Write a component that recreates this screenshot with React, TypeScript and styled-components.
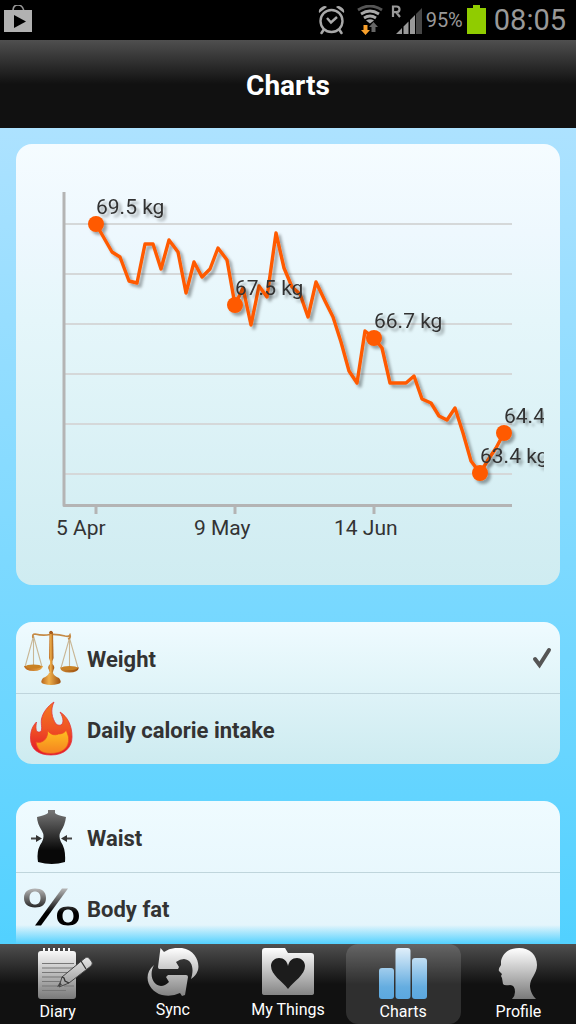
import React, { useState } from "react";
import styled, { createGlobalStyle } from "styled-components";

const GlobalStyle = createGlobalStyle`
  * { box-sizing: border-box; }
  body {
    margin: 0;
    background: #52d1ff;
    font-family: Roboto, "Liberation Sans", sans-serif;
    color: #333;
  }
`;

const Screen = styled.div`
  display: flex;
  flex-direction: column;
  height: 100vh;
  overflow: hidden;
`;

const StatusBar = styled.div`
  display: flex;
  align-items: center;
  justify-content: space-between;
  flex: none;
  height: 40px;
  padding: 0 10px 0 4px;
  background: #000;
  color: #999;
`;

const StatusGroup = styled.div`
  display: flex;
  align-items: center;
`;

const StatusGap = styled.span<{ $narrow?: boolean }>`
  width: ${(p) => (p.$narrow ? "8px" : "12px")};
`;

const BatteryLevel = styled.span`
  margin: 0 4px;
  font-size: 20px;
  line-height: 40px;
`;

const Clock = styled.span`
  margin-left: 8px;
  font-size: 29px;
  line-height: 40px;
`;

const Header = styled.header`
  display: flex;
  align-items: center;
  justify-content: center;
  flex: none;
  height: 88px;
  background: linear-gradient(#4f4f4f, #111 50%);
`;

const Title = styled.h1`
  margin: 0;
  padding-top: 4px;
  font-size: 28px;
  line-height: 32px;
  font-weight: 700;
  color: #fff;
`;

const Content = styled.main`
  position: relative;
  display: flex;
  flex-direction: column;
  gap: 37px;
  flex: 1;
  min-height: 0;
  overflow: hidden;
  padding: 16px 16px 0;
  background: linear-gradient(#ade2ff, #52d1ff);
`;

const BottomFade = styled.div`
  position: absolute;
  left: 0;
  right: 0;
  bottom: 0;
  height: 19px;
  background: linear-gradient(rgba(82, 209, 255, 0), #52d1ff);
  pointer-events: none;
`;

const ChartCard = styled.section`
  flex: none;
  padding: 16px;
  border-radius: 16px;
  background: linear-gradient(#f5fcff, #eef8fe 20%, #e5f6fa 40%, #cfecf1);
`;

const ChartDrawing = styled.svg`
  display: block;
  width: 100%;
  height: auto;
  overflow: hidden;
`;

const ChartText = styled.text`
  font-size: 21px;
  fill: #333;
`;

const Choices = styled.fieldset<{ $continues?: boolean }>`
  flex: ${(p) => (p.$continues ? "1 0 auto" : "none")};
  margin: 0;
  padding: 0;
  border: 0;
  border-radius: ${(p) => (p.$continues ? "16px 16px 0 0" : "16px")};
  overflow: hidden;
  background: ${(p) =>
    p.$continues
      ? "linear-gradient(#effbff, #e2f4fb)"
      : "linear-gradient(#effbff, #cdebf0)"};
`;

const ChoiceRow = styled.label`
  display: flex;
  align-items: center;
  gap: 8px;
  height: 71px;
  padding: 0 8px;
  font-size: 22px;
  line-height: 32px;
  font-weight: 700;
  cursor: pointer;

  & + & {
    border-top: 1px solid #bfd5dc;
  }
`;

const ChoiceName = styled.span`
  flex: 1;
  padding-top: 4px;
`;

const HiddenRadio = styled.input`
  appearance: none;
  width: 0;
  height: 0;
  margin: 0;
`;

const TabBar = styled.nav`
  display: flex;
  flex: none;
  height: 80px;
  background: linear-gradient(#4f4f4f, #111 50%);
`;

const Tab = styled.a<{ $active?: boolean }>`
  display: flex;
  flex: 1;
  flex-direction: column;
  align-items: center;
  padding-top: 4px;
  border-radius: 12px;
  background: ${(p) => (p.$active ? "rgba(255, 255, 255, 0.13)" : "none")};
  color: #fff;
  font-size: 16px;
  line-height: 24px;
  text-decoration: none;
`;

const weights: [number, number][] = [
  [64, 80], [72, 94], [80, 108], [88, 113], [97, 137], [105, 139], [113, 100],
  [121, 100], [129, 125], [137, 96], [146, 108], [154, 149], [162, 118],
  [170, 133], [178, 125], [186, 104], [195, 116], [203, 161], [211, 144],
  [219, 181], [227, 142], [235, 153], [244, 89], [252, 124], [260, 143],
  [268, 150], [276, 173], [284, 138], [293, 157], [301, 173], [309, 198],
  [317, 227], [325, 239], [333, 187], [342, 194], [350, 204], [358, 239],
  [366, 239], [374, 239], [382, 232], [390, 255], [399, 259], [407, 272],
  [415, 276], [423, 264], [431, 289], [439, 317], [448, 329], [456, 316],
  [464, 304], [472, 289],
];

const marks = [
  { x: 64, y: 80, label: "69.5 kg" },
  { x: 203, y: 161, label: "67.5 kg" },
  { x: 342, y: 194, label: "66.7 kg" },
  { x: 448, y: 329, label: "63.4 kg" },
  { x: 472, y: 289, label: "64.4 kg" },
];

const dates = [
  { x: 64, textX: 24, label: "5 Apr" },
  { x: 203, textX: 162, label: "9 May" },
  { x: 342, textX: 302, label: "14 Jun" },
];

function WeightChart() {
  return (
    <ChartDrawing viewBox="0 16 512 409" role="img" aria-label="Weight over time">
      <defs>
        <filter id="shade" x="-10%" y="-20%" width="130%" height="150%">
          <feDropShadow dx="3" dy="3" stdDeviation="1.6" floodColor="#000" floodOpacity="0.35" />
        </filter>
      </defs>
      <g stroke="#d5d8d9" strokeWidth="2">
        {[80, 130, 180, 230, 280, 330].map((y) => (
          <line key={y} x1="33" x2="480" y1={y} y2={y} />
        ))}
      </g>
      <path d="M32 48V361.5H480" fill="none" stroke="#b4b4b4" strokeWidth="3" strokeLinejoin="round" />
      {dates.map((d) => (
        <g key={d.label}>
          <line x1={d.x} x2={d.x} y1="362" y2="370" stroke="#b4b4b4" strokeWidth="3" />
          <ChartText x={d.textX} y="391">{d.label}</ChartText>
        </g>
      ))}
      <g filter="url(#shade)">
        <polyline
          points={weights.map((p) => p.join(",")).join(" ")}
          fill="none"
          stroke="#ff5a00"
          strokeWidth="3.4"
          strokeLinejoin="round"
        />
        {marks.map((m) => (
          <circle key={m.label} cx={m.x} cy={m.y} r="8" fill="#ff5a00" />
        ))}
      </g>
      <g filter="url(#shade)">
        {marks.map((m) => (
          <ChartText key={m.label} x={m.x} y={m.y - 10}>
            {m.label}
          </ChartText>
        ))}
      </g>
    </ChartDrawing>
  );
}

const StoreIcon = () => (
  <svg width="28" height="30" viewBox="0 0 28 30">
    <path d="M9 6C9 2 11 0 14 0s5 2 6 6" fill="none" stroke="#999" strokeWidth="1.6" />
    <path d="M0 5h28v22H0z" fill="#b1b1b1" />
    <path d="M10 10l12 6.500-12 6.500z" fill="#000" />
  </svg>
);

const AlarmIcon = () => (
  <svg width="27" height="30" viewBox="0 0 27 30">
    <g fill="none" stroke="#a9a9a9" strokeLinecap="round">
      <circle cx="13.500" cy="16" r="11" strokeWidth="2.400" />
      <path d="M9 13l4 4.500 6-5.500" strokeWidth="2.400" strokeLinecap="butt" />
      <path d="M5.500 25l-2 3M21.500 25l2 3" strokeWidth="2.600" />
    </g>
    <path d="M1 8Q0 4 4 2q3-2 5 0zM26 8q1-4-3-6-3-2-5 0z" fill="#a9a9a9" />
  </svg>
);

const WifiIcon = () => (
  <svg width="26" height="30" viewBox="0 0 26 30">
    <g fill="none" strokeWidth="2.800">
      <path d="M1 5q12-8 24 0" stroke="#555" />
      <path d="M4 9q9-6 18 0M7 13q6-4 12 0" stroke="#a9a9a9" />
    </g>
    <path d="M9 15.500q4-2.500 8 0l-4 3z" fill="#a9a9a9" />
    <path d="M6.500 20h4v5h2.500l-4.500 5-4.500-5h2.500z" fill="#f9a02b" />
    <path d="M14.500 27V22H12l4.500-5 4.500 5h-2.500v5z" fill="#666" />
  </svg>
);

const SignalIcon = () => (
  <svg width="31" height="30" viewBox="0 0 31 30">
    <path d="M2 12V1.500h3.500q3 0 3 2.800t-3 2.800H2M5 7l4 5" fill="none" stroke="#999" strokeWidth="2.200" />
    <path d="M5 29l6-6v6zM12.500 21.500l5-5V29h-5zM19 15l5-5v19h-5z" fill="#999" />
    <path d="M25 9l6-6v26h-6z" fill="#474747" />
  </svg>
);

const BatteryIcon = () => (
  <svg width="19" height="30" viewBox="0 0 19 30">
    <path d="M6 0h7v3h6v26H0V3h6z" fill="#90cc00" />
  </svg>
);

const ScalesIcon = () => (
  <svg width="55" height="56" viewBox="0 0 55 56" fill="none">
    <defs>
      <linearGradient id="gold">
        <stop offset="0" stopColor="#b8651b" />
        <stop offset=".4" stopColor="#efb04c" />
        <stop offset="1" stopColor="#9c4f0e" />
      </linearGradient>
    </defs>
    <path d="M9.500 6L1 37M9.500 6v31M9.500 6L18 37M45.500 8L37 38M45.500 8v30M45.500 8L54 38" stroke="#c9b796" strokeWidth="1.100" />
    <path d="M9 8q-1-4 2-4 8 2 15 .5Q34 4 41 6q4 1 5-1 1 3-2 4" stroke="#c58a45" strokeWidth="1.700" />
    <path d="M25.500 2h3.500l.5 26-1 3h-2.500l-1-3z" fill="url(#gold)" />
    <circle cx="27" cy="2.500" r="1.700" fill="#a85c1c" />
    <path d="M26 31h2.500v3q3 3 1 6l-1 4h-2.500l-1-4q-2-3 1-6z" fill="url(#gold)" />
    <path d="M25 43h4q1 3 6 5 4 5-1 6-7 2-14 0-5-1-1-6 5-2 6-5z" fill="url(#gold)" />
    <path d="M0 36h19q-1 5-9.500 5T0 36zM36 37.500h19q-1 5-9.500 5T36 37.500z" fill="url(#gold)" />
    <ellipse cx="9.500" cy="36.500" rx="8" ry="2" fill="#c98224" />
    <ellipse cx="45.500" cy="38" rx="8" ry="2" fill="#c98224" />
  </svg>
);

const FlameIcon = () => (
  <svg width="55" height="56" viewBox="0 0 55 56">
    <defs>
      <linearGradient id="red" x2="0" y2="1">
        <stop offset="0" stopColor="#f47b20" />
        <stop offset=".5" stopColor="#ef5423" />
        <stop offset="1" stopColor="#e3122b" />
      </linearGradient>
      <linearGradient id="amber" x2="0" y2="1">
        <stop offset="0" stopColor="#ffc420" />
        <stop offset="1" stopColor="#f58220" />
      </linearGradient>
    </defs>
    <path d="M30 1C26 9 28 17 32 23c6 4 10-2 4-12 8 5 12 14 12 25 0 11-8 18-21 18S6.500 48 6.500 37c0-7 2-12 6-16-1 5-1 11 3 10s1-7 2-13C19 11 24 5 30 1z" fill="url(#red)" stroke="#e4343a" strokeWidth=".8" />
    <path d="M23.500 28c1 5 7 7 11 5 4 0 7-2 8-4.500 0 4 3 6 2 12-1 8-8 12-18 12S13 48 12 41c6 2 13-3 11.500-13z" fill="url(#amber)" stroke="#ee4c20" strokeWidth=".8" />
  </svg>
);

const WaistIcon = () => (
  <svg width="55" height="56" viewBox="0 0 55 56">
    <defs>
      <linearGradient id="torso" x2="0" y2="1">
        <stop offset="0" stopColor="#777" />
        <stop offset=".75" stopColor="#080808" />
      </linearGradient>
    </defs>
    <path d="M24 1h7v3q1 2 11 4-1 8-5 14-3 5 0 11 5 7 4 20-13 4-27 0-2-12 4-20 3-6 0-11-5-8-5-14 9-2 11-4z" fill="url(#torso)" />
    <path d="M7 29.500h8M48 29.500h-8" stroke="#444" strokeWidth="1.800" />
    <path d="M12 26l6 3.500-6 3.500zM43 26l-6 3.500 6 3.500z" fill="#333" />
  </svg>
);

const PercentIcon = () => (
  <svg width="55" height="56" viewBox="0 0 55 56">
    <defs>
      <linearGradient id="ink" gradientUnits="userSpaceOnUse" x1="0" y1="8" x2="0" y2="46">
        <stop offset="0" stopColor="#bbb" />
        <stop offset=".65" stopColor="#000" />
      </linearGradient>
    </defs>
    <path d="M38 8.500h6L17 45.500h-6z" fill="url(#ink)" />
    <path fillRule="evenodd" d="M11 8.500c7 0 11 3 11 9.500s-4 9.500-11 9.500S0 24 0 18 4 8.500 11 8.500zm0 3c-3 0-5.500 2-5.500 6.500s2.500 6.500 5.500 6.500 5.500-2 5.500-6.500-2.500-6.500-5.500-6.500zM44 26.500c7 0 11 3 11 9.500s-4 9.500-11 9.500-11-3-11-9.500 4-9.500 11-9.500zm0 3c-3 0-5.500 2-5.500 6.500s2.500 6.500 5.500 6.500 5.500-2 5.500-6.500-2.500-6.500-5.500-6.500z" fill="url(#ink)" />
  </svg>
);

const CheckMark = () => (
  <svg width="20" height="22" viewBox="0 0 20 22">
    <path d="M3 12l4.500 6L17 3" fill="none" stroke="#555" strokeWidth="4" strokeLinecap="round" />
  </svg>
);

const SilverFill = ({ id }: { id: string }) => (
  <defs>
    <linearGradient id={id} gradientUnits="userSpaceOnUse" x1="0" y1="0" x2="0" y2="52">
      <stop offset="0" stopColor="#fff" />
      <stop offset="1" stopColor="#777" />
    </linearGradient>
  </defs>
);

const DiaryIcon = () => (
  <svg width="70" height="52" viewBox="-15 0 70 52">
    <SilverFill id="silver1" />
    <path d="M3 3h2V0h2v3h3V0h2v3h3V0h2v3h3V0h2v3h3V0h2v3h3V0h2v3h3q3 0 3 3v42q0 3-3 3H3q-3 0-3-3V6q0-3 3-3z" fill="url(#silver1)" />
    <path d="M4 15.500h32M4 20h31M4 24.500h28M4 29h24M4 33.500h20M4 38h16M26 38h10M4 42.500h24" stroke="#777" strokeWidth="1.200" />
    <path d="M24 29L47 10q2-2 4 0l3 4q1 2-1 4L31 35l-10 4z" fill="url(#silver1)" stroke="#444" strokeWidth="1" />
    <path d="M24 29l2 1 1 3 4 2M43 13l5 8" fill="none" stroke="#333" strokeWidth="1.300" />
    <path d="M19 39l3-5 2 3z" fill="#444" />
  </svg>
);

const SyncIcon = () => (
  <svg width="52" height="50" viewBox="0 0 52 50">
    <SilverFill id="silver2" />
    <path d="M13.500 0L17 4Q24-1 35 0C48 2 53 14 51 22Q49 28 44 31C47 22 46 12 37 11Q33 11 29 14L32 19 31 21H12.500Q11 21 11 19z" fill="url(#silver2)" />
    <path d="M7 17C2 26 5 37 14 38Q18 38 22 34L19 29 21 27H39Q41 27 41 29L38 47 35 48 33 45Q25 49 15 47C1 43-5 27 7 17z" fill="url(#silver2)" />
  </svg>
);

const ThingsIcon = () => (
  <svg width="52" height="50" viewBox="0 0 52 50">
    <SilverFill id="silver3" />
    <path d="M3 0h20l3 5h23q3 0 3 3v37q0 2-3 2H3q-3 0-3-2V3q0-3 3-3z" fill="url(#silver3)" />
    <path d="M26 41C20 33 9 27 9 18c0-5 4-8 8-8 5 0 8 3 9 8 1-5 4-8 9-8 4 0 8 3 8 8 0 9-11 15-17 23z" fill="#1c1c1c" />
  </svg>
);

const BarsIcon = () => (
  <svg width="48" height="52" viewBox="0 0 48 52">
    <defs>
      <linearGradient id="blue" gradientUnits="userSpaceOnUse" x1="0" y1="0" x2="0" y2="52">
        <stop offset="0" stopColor="#e0effa" />
        <stop offset=".75" stopColor="#65ade0" />
        <stop offset="1" stopColor="#5aa7df" />
      </linearGradient>
    </defs>
    <g fill="url(#blue)">
      <rect y="20" width="15" height="31" rx="3" />
      <rect x="16.500" width="15" height="51" rx="3" />
      <rect x="33" y="10" width="15" height="41" rx="3" />
    </g>
  </svg>
);

const ProfileIcon = () => (
  <svg width="40" height="52" viewBox="0 0 40 52">
    <SilverFill id="silver4" />
    <path d="M3 13C5 4 12 0 21 0c11 0 18 7 18 17 0 9-7 13-7 21 0 5 3 10 6 13H14q3-3 3-7 0-7-5-7-6 1-7-1l-1-6-1-2 1-2-3-3q-1-2 2-6z" fill="url(#silver4)" />
  </svg>
);

const groups = [
  [
    { name: "Weight", Icon: ScalesIcon },
    { name: "Daily calorie intake", Icon: FlameIcon },
  ],
  [
    { name: "Waist", Icon: WaistIcon },
    { name: "Body fat", Icon: PercentIcon },
  ],
];

const tabs = [
  { name: "Diary", Icon: DiaryIcon },
  { name: "Sync", Icon: SyncIcon },
  { name: "My Things", Icon: ThingsIcon },
  { name: "Charts", Icon: BarsIcon },
  { name: "Profile", Icon: ProfileIcon },
];

export default function App() {
  const [selected, setSelected] = useState("Weight");
  return (
    <Screen>
      <GlobalStyle />
      <StatusBar>
        <StoreIcon />
        <StatusGroup>
          <AlarmIcon />
          <StatusGap />
          <WifiIcon />
          <StatusGap $narrow />
          <SignalIcon />
          <BatteryLevel>95%</BatteryLevel>
          <BatteryIcon />
          <Clock>08:05</Clock>
        </StatusGroup>
      </StatusBar>
      <Header>
        <Title>Charts</Title>
      </Header>
      <Content>
        <ChartCard>
          <WeightChart />
        </ChartCard>
        {groups.map((group, i) => (
          <Choices key={i} $continues={i === groups.length - 1}>
            {group.map(({ name, Icon }) => (
              <ChoiceRow key={name}>
                <Icon />
                <ChoiceName>{name}</ChoiceName>
                <HiddenRadio
                  type="radio"
                  name="chart"
                  checked={selected === name}
                  onChange={() => setSelected(name)}
                />
                {selected === name && <CheckMark />}
              </ChoiceRow>
            ))}
          </Choices>
        ))}
        <BottomFade />
      </Content>
      <TabBar>
        {tabs.map(({ name, Icon }) => (
          <Tab key={name} href={"#" + name} $active={name === "Charts"}>
            <Icon />
            {name}
          </Tab>
        ))}
      </TabBar>
    </Screen>
  );
}
